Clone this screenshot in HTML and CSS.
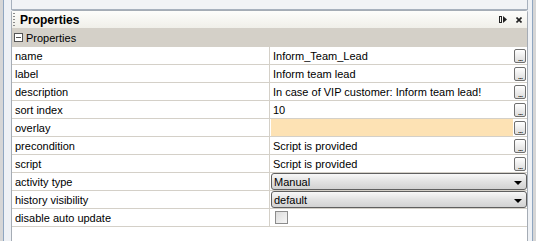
FILE: index.html
```html
<!DOCTYPE html>
<html>
<head>
<meta charset="utf-8">
<link rel="stylesheet" href="styles.css">
</head>
<body>
<div class="frame">
  <div class="top-panel"></div>
  <div class="panel">
    <div class="titlebar">
      <span class="grip"></span>
      <span class="title">Properties</span>
      <span class="tb-icons">
        <svg width="9" height="7" viewBox="0 0 9 7"><rect x="0.5" y="0.5" width="2" height="6" fill="none" stroke="#222"/><path d="M4 0 L8 3.5 L4 7 Z" fill="#222"/></svg>
        <svg width="6" height="6" viewBox="0 0 6 6"><path d="M0.5 0.5 L5.5 5.5 M5.5 0.5 L0.5 5.5" stroke="#222" stroke-width="1.6"/></svg>
      </span>
    </div>
    <div class="category">
      <span class="minus"></span>
      <span>Properties</span>
    </div>
    <div class="row"><div class="key">name</div><div class="val"><span class="field">Inform_Team_Lead</span><span class="btn">...</span></div></div>
    <div class="row"><div class="key">label</div><div class="val"><span class="field">Inform team lead</span><span class="btn">...</span></div></div>
    <div class="row"><div class="key">description</div><div class="val"><span class="field">In case of VIP customer: Inform team lead!</span><span class="btn">...</span></div></div>
    <div class="row"><div class="key">sort index</div><div class="val"><span class="field">10</span><span class="btn">...</span></div></div>
    <div class="row"><div class="key">overlay</div><div class="val"><span class="field peach"></span><span class="btn">...</span></div></div>
    <div class="row"><div class="key">precondition</div><div class="val"><span class="field">Script is provided</span><span class="btn">...</span></div></div>
    <div class="row"><div class="key">script</div><div class="val"><span class="field">Script is provided</span><span class="btn">...</span></div></div>
    <div class="row"><div class="key">activity type</div><div class="val"><div class="combo"><span>Manual</span><span class="arrow"></span></div></div></div>
    <div class="row"><div class="key">history visibility</div><div class="val"><div class="combo"><span>default</span><span class="arrow"></span></div></div></div>
    <div class="row"><div class="key">disable auto update</div><div class="val"><span class="check"></span></div></div>
  </div>
</div>
</body>
</html>
```
FILE: styles.css
```css
html, body {
  margin: 0;
  padding: 0;
}
body {
  background: #d6d6d6;
  font-family: "Liberation Sans", Arial, sans-serif;
  font-size: 11px;
  color: #000;
  width: 536px;
  height: 241px;
  overflow: hidden;
}
.frame {
  margin-left: 3px;
  width: 528px;
  height: 241px;
  border-left: 1px solid #8fa6c1;
  border-right: 1px solid #8fa6c1;
  background: #eef1f5;
}
.top-panel {
  margin-left: 7px;
  width: 515px;
  height: 9px;
  border: 1px solid #a7b1be;
  border-top: none;
  background: #f1f3f6;
}
.panel {
  margin-left: 7px;
  width: 515px;
  height: 240px;
  border: 1px solid #a5acb5;
  border-bottom: none;
  border-radius: 3px 3px 0 0;
  background: #fff;
}
.titlebar {
  height: 17px;
  display: flex;
  align-items: center;
  background: linear-gradient(#fdfdfb, #f0efe9);
  border-bottom: 1px solid #d4d0c8;
}
.grip {
  width: 2px;
  height: 14px;
  margin-left: 1px;
  margin-right: 5px;
  background: repeating-linear-gradient(#8a8a8a 0 1px, transparent 1px 3px);
}
.title {
  font-weight: bold;
  font-size: 12px;
}
.tb-icons {
  margin-left: auto;
  display: flex;
  align-items: center;
  gap: 8px;
  margin-right: 5px;
}
.category {
  height: 17px;
  display: flex;
  align-items: center;
  background: #d4d0c8;
  border-bottom: 1px solid #d4d0c8;
  gap: 3px;
}
.minus {
  width: 7px;
  height: 7px;
  margin-left: 2px;
  border: 1px solid #555;
  background: linear-gradient(#555, #555) center / 5px 1px no-repeat, #fff;
}
.row {
  display: flex;
  height: 17px;
  border-bottom: 1px solid #d4d0c8;
}
.key {
  width: 254px;
  padding-left: 3px;
  border-right: 1px solid #d4d0c8;
  display: flex;
  align-items: center;
}
.val {
  flex: 1;
  display: flex;
  align-items: center;
  padding-left: 1px;
}
.field {
  flex: 1;
  align-self: stretch;
  display: flex;
  align-items: center;
  padding-left: 2px;
  margin-right: 1px;
}
.peach {
  background: #fde2b4;
}
.btn {
  width: 10px;
  height: 12px;
  margin-right: 1px;
  border: 1px solid #6f6f6f;
  border-radius: 2px;
  background: linear-gradient(#ffffff, #dcdcdc);
  font-size: 9px;
  line-height: 17px;
  text-align: center;
  letter-spacing: -1px;
  overflow: hidden;
  color: #000;
}
.combo {
  flex: 1;
  height: 15px;
  margin-right: 0;
  border: 1px solid #5f5f5f;
  border-radius: 3px;
  background: linear-gradient(#f8f8f8, #e2e2e2 50%, #d2d2d2);
  display: flex;
  align-items: center;
  padding-left: 2px;
  font-size: 11px;
}
.arrow {
  margin-left: auto;
  margin-right: 4px;
  margin-top: 3px;
  width: 0;
  height: 0;
  border-left: 4px solid transparent;
  border-right: 4px solid transparent;
  border-top: 4px solid #000;
}
.check {
  width: 11px;
  height: 11px;
  margin-left: 4px;
  border: 1px solid #8c8c8c;
  background: linear-gradient(135deg, #dcdcdc, #f6f6f6);
}
```
